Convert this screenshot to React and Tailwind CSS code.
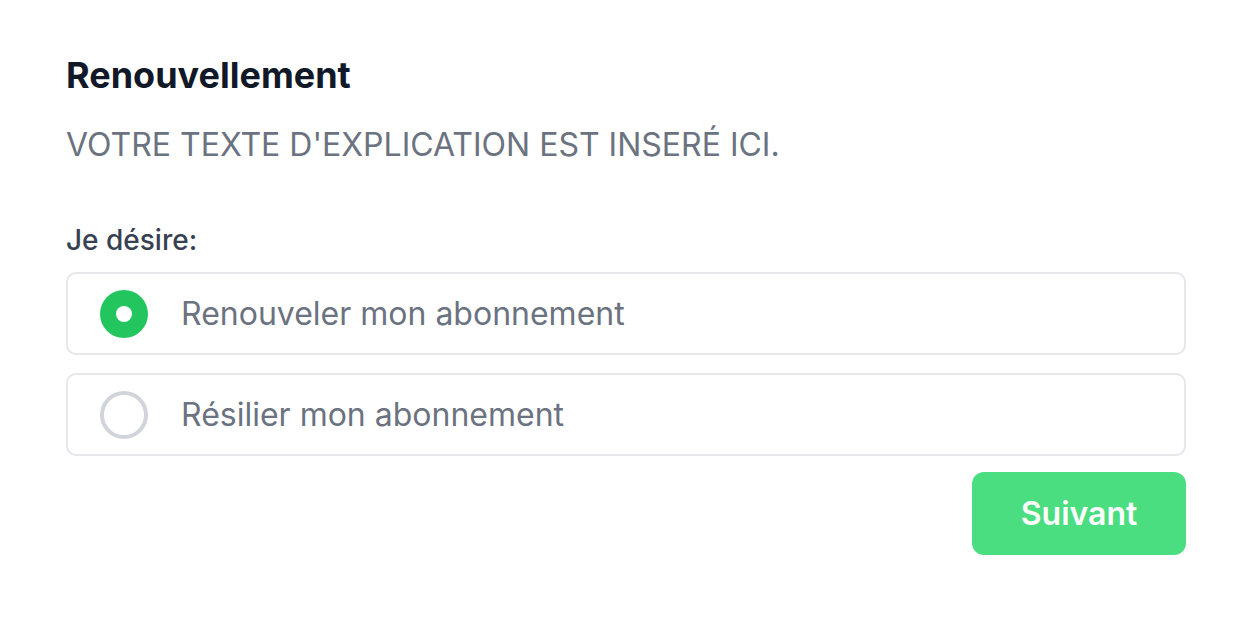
export default function App() {
  return (
    <div className="w-[1256px] h-[624px] bg-white" style={{ fontFamily: 'Inter, "Noto Sans", sans-serif' }}>
      <div className="pl-[66px] pr-[70px] pt-[47px]">
        <h1 className="text-[36px] leading-[56px] font-bold text-[#111827]">Renouvellement</h1>
        <p className="mt-[18px] text-[32px] leading-[48px] text-[#6b7280] uppercase">Votre texte d'explication est inseré ici.</p>
        <div className="mt-[51px] text-[28px] leading-[40px] font-medium text-[#374151]">Je désire:</div>
        <div className="mt-[12px] flex flex-col gap-[18px]">
          <label className="flex items-center h-[83px] border-2 border-[#e5e7eb] rounded-[10px] pl-[32px]">
            <span className="w-[48px] h-[48px] rounded-full bg-[#22c55e] flex items-center justify-center">
              <span className="w-[16px] h-[16px] rounded-full bg-white" />
            </span>
            <span className="ml-[33px] text-[32px] text-[#6b7280]">Renouveler mon abonnement</span>
          </label>
          <label className="flex items-center h-[83px] border-2 border-[#e5e7eb] rounded-[10px] pl-[32px]">
            <span className="w-[48px] h-[48px] rounded-full border-[4px] border-[#d1d5db]" />
            <span className="ml-[33px] text-[32px] text-[#6b7280]">Résilier mon abonnement</span>
          </label>
        </div>
        <div className="mt-[16px] flex justify-end">
          <button className="w-[214px] h-[83px] bg-[#4ade80] rounded-[12px] text-white text-[32px] font-semibold">Suivant</button>
        </div>
      </div>
    </div>
  );
}
